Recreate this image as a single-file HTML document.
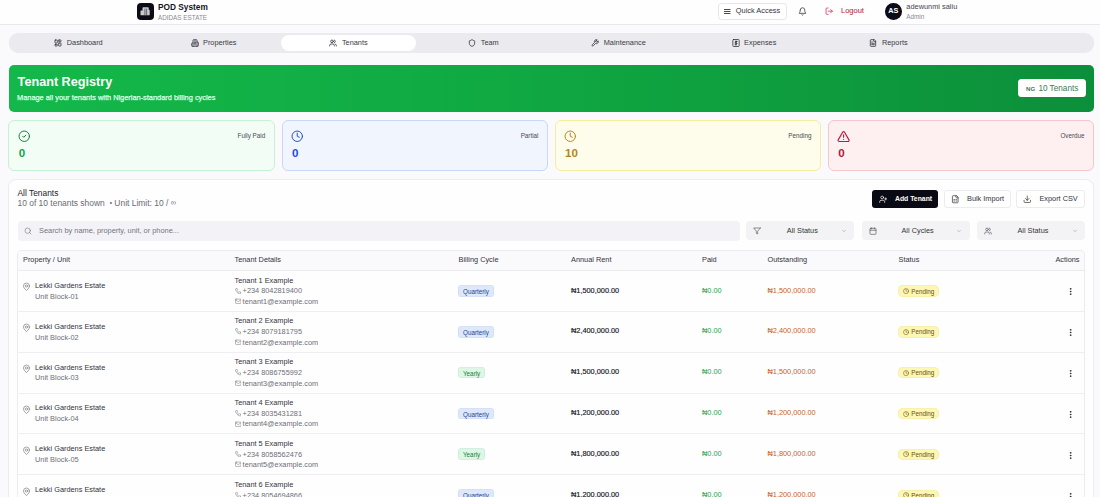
<!DOCTYPE html>
<html><head><meta charset="utf-8">
<style>
*{box-sizing:border-box;margin:0;padding:0}
html,body{width:1100px;height:497px;overflow:hidden}
body{font-family:"Liberation Sans",sans-serif;background:#fafafc;color:#252530;position:relative;font-size:7.35px}
.abs{position:absolute}
svg{display:block;fill:none;stroke:currentColor;stroke-width:2;stroke-linecap:round;stroke-linejoin:round}
.t{position:absolute;white-space:nowrap;line-height:1}
/* header */
#hdr{position:absolute;left:0;top:0;width:1100px;height:25px;background:#fefefe;border-bottom:1px solid #e8e8ee}
#logo{left:137px;top:3px;width:16.5px;height:16.5px;border-radius:4px;background:#0c0c16;color:#fff}
#nav{left:8.5px;top:33px;width:1085px;height:20px;border-radius:9px;background:#ebeaef}
.tab{position:absolute;top:2.3px;height:16px;padding-bottom:1.4px;width:135px;border-radius:8px;display:flex;align-items:center;justify-content:center;color:#3a3a44;font-size:7.35px}
.tab svg{width:8px;height:8px;margin-right:4.5px;stroke-width:2.3;color:#2e2e38}
.tab.on{background:#fff}
#banner{left:8.5px;top:65px;width:1085px;height:46.5px;border-radius:5px;background:linear-gradient(90deg,#14b84a 0%,#10a942 45%,#0c8f3a 100%)}
.stat{position:absolute;top:120.3px;width:266.2px;height:51px;border-radius:6px;border:1px solid}
.stat svg{position:absolute;left:8.9px;top:8.9px;width:12.5px;height:12.5px;stroke-width:1.9}
.stat .num{position:absolute;left:9.5px;top:26.6px;font-size:11.55px;font-weight:700;line-height:1}
.stat .lbl{position:absolute;right:8.3px;top:12px;font-size:6.3px;color:#4a4a55;line-height:1}
#card{left:8px;top:179px;width:1085.6px;height:340px;border-radius:8px;border:1px solid #ebebf0;background:#fefefe}
.btn{position:absolute;top:189.8px;height:18.6px;border-radius:3px;display:flex;align-items:center;font-size:7.35px}
.sel{position:absolute;top:221.4px;height:19px;width:108px;border-radius:4px;background:#f3f3f6;color:#333}
.sel svg{position:absolute;top:5.5px;width:8px;height:8px;color:#4a4a52;stroke-width:1.8}
.sel .tx{position:absolute;top:5.5px;left:2px;width:100%;text-align:center;line-height:1}
#table{left:17px;top:249.5px;width:1067.5px;height:300px;border:1px solid #ececf0;border-radius:4px;background:#fefefe;overflow:hidden}
.th{position:absolute;top:0;height:20.5px;width:100%;background:#fafafc;border-bottom:1px solid #ebebef}
.row{position:absolute;left:0;width:100%;height:40.85px;border-bottom:1px solid #efeff3}
.c{position:absolute;white-space:nowrap;line-height:1}
.badge{position:absolute;height:11.8px;border-radius:3.5px;font-size:6.3px;line-height:13px;padding:0 5px;box-shadow:inset 0 0 0 0.6px rgba(120,150,220,0.18)}
.pend{position:absolute;left:879.7px;top:14.3px;width:41.5px;height:11.5px;border-radius:5px;background:#fdf7b6;color:#6a4f0e;font-size:6.3px;box-shadow:inset 0 0 0 0.6px #f6eca0}
</style></head>
<body>
<div id="hdr"></div>
<div id="logo" class="abs">
 <svg viewBox="0 0 16.5 16.5" style="position:absolute;left:0;top:0;width:16.5px;height:16.5px;stroke:none"><path d="M6.2 4.2h4.9a0.6 0.6 0 0 1 0.6 0.6v2h0.4a0.6 0.6 0 0 1 0.6 0.6v4.3a0.5 0.5 0 0 1-0.5 0.5h-8.2a0.5 0.5 0 0 1-0.5-0.5v-3.7a0.6 0.6 0 0 1 0.6-0.6h1.4v-2.6a0.6 0.6 0 0 1 0.6-0.6z" fill="#c9c9ce"/><path d="M7.9 6v6.2M9.6 6v6.2" stroke="#3a3a44" stroke-width="0.7" fill="none"/></svg>
</div>
<div class="t" style="left:158px;top:2.6px;font-size:8.3px;font-weight:700;color:#15151e">POD System</div>
<div class="t" style="left:158px;top:15.1px;font-size:6.33px;color:#8a8a94">ADIDAS ESTATE</div>

<div class="abs" style="left:718px;top:3px;width:68.5px;height:16.5px;border:1px solid #e6e6ec;border-radius:3.5px;background:#fff"></div>
<svg class="abs" viewBox="0 0 8 8" style="left:723px;top:7px;width:8px;height:8px;color:#4a4a54;stroke-width:1;stroke-linecap:butt"><path d="M1 2.5h6.5M1 4.5h6.5M1 6.5h6.5"/></svg>
<div class="t" style="left:735.8px;top:7.4px;font-size:7.4px;color:#33333d">Quick Access</div>
<svg class="abs" viewBox="0 0 24 24" style="left:797.5px;top:7px;width:9px;height:9px;color:#333"><path d="M6 8a6 6 0 0 1 12 0c0 7 3 9 3 9H3s3-2 3-9"/><path d="M10.3 21a1.94 1.94 0 0 0 3.4 0"/></svg>
<svg class="abs" viewBox="0 0 24 24" style="left:824.6px;top:7.3px;width:8.4px;height:8.4px;color:#c81e45"><path d="M9 21H5a2 2 0 0 1-2-2V5a2 2 0 0 1 2-2h4"/><polyline points="16 17 21 12 16 7"/><line x1="21" x2="9" y1="12" y2="12"/></svg>
<div class="t" style="left:841px;top:7px;font-size:7.5px;color:#c2193f;-webkit-text-stroke:0.05px #c2193f">Logout</div>
<div class="abs" style="left:885px;top:3px;width:16.6px;height:16.6px;border-radius:50%;background:#0c0c18;color:#fff;font-weight:700;font-size:7.3px;line-height:16.6px;text-align:center">AS</div>
<div class="t" style="left:906.3px;top:3.2px;font-size:7.4px;color:#44444e">adewunmi saliu</div>
<div class="t" style="left:906.3px;top:13.8px;font-size:6.35px;color:#8a8a94">Admin</div>

<div id="nav" class="abs">
 <div class="tab" style="left:2.5px"><svg viewBox="0 0 24 24"><rect width="7" height="9" x="3" y="3" rx="1"/><rect width="7" height="5" x="14" y="3" rx="1"/><rect width="7" height="9" x="14" y="12" rx="1"/><rect width="7" height="5" x="3" y="16" rx="1"/></svg>Dashboard</div>
 <div class="tab" style="left:137.5px"><svg viewBox="0 0 24 24"><path d="M6 22V4a2 2 0 0 1 2-2h8a2 2 0 0 1 2 2v18Z"/><path d="M6 12H4a2 2 0 0 0-2 2v6a2 2 0 0 0 2 2h2"/><path d="M18 9h2a2 2 0 0 1 2 2v9a2 2 0 0 1-2 2h-2"/><path d="M10 6h4M10 10h4M10 14h4M10 18h4"/></svg>Properties</div>
 <div class="tab on" style="left:272.5px"><svg viewBox="0 0 24 24"><path d="M16 21v-2a4 4 0 0 0-4-4H6a4 4 0 0 0-4 4v2"/><circle cx="9" cy="7" r="4"/><path d="M22 21v-2a4 4 0 0 0-3-3.87"/><path d="M16 3.13a4 4 0 0 1 0 7.75"/></svg>Tenants</div>
 <div class="tab" style="left:407.5px"><svg viewBox="0 0 24 24"><path d="M20 13c0 5-3.5 7.5-7.66 8.95a1 1 0 0 1-.67-.01C7.5 20.5 4 18 4 13V6a1 1 0 0 1 1-1c2 0 4.5-1.2 6.24-2.72a1.17 1.17 0 0 1 1.52 0C14.51 3.810 17 5 19 5a1 1 0 0 1 1 1z"/></svg>Team</div>
 <div class="tab" style="left:542.5px"><svg viewBox="0 0 24 24"><path d="M14.7 6.3a1 1 0 0 0 0 1.4l1.6 1.6a1 1 0 0 0 1.4 0l3.77-3.77a6 6 0 0 1-7.94 7.94l-6.91 6.91a2.12 2.12 0 0 1-3-3l6.91-6.91a6 6 0 0 1 7.94-7.94l-3.760 3.76z"/></svg>Maintenance</div>
 <div class="tab" style="left:677.5px"><svg viewBox="0 0 24 24" style="margin-left:1px"><rect x="2.5" y="1.5" width="19" height="21" rx="2.5"/><path d="M15 7.5h-3.6a2 2 0 0 0 0 4h1.2a2 2 0 0 1 0 4H9M12 5.5v13" stroke-width="2.8"/></svg>Expenses</div>
 <div class="tab" style="left:812.5px"><svg viewBox="0 0 24 24"><path d="M15 2H6a2 2 0 0 0-2 2v16a2 2 0 0 0 2 2h12a2 2 0 0 0 2-2V7Z"/><path d="M14 2v4a2 2 0 0 0 2 2h4"/><path d="M10 9H8M16 13H8M16 17H8"/></svg>Reports</div>
</div>

<div id="banner" class="abs"></div>
<div class="t" style="left:17.6px;top:76px;font-size:12.65px;font-weight:700;color:#fff">Tenant Registry</div>
<div class="t" style="left:17px;top:93.5px;font-size:7.4px;color:#dcffe6;-webkit-text-stroke:0.25px #dcffe6">Manage all your tenants with Nigerian-standard billing cycles</div>
<div class="abs" style="left:1018px;top:78.7px;width:67.5px;height:18.7px;border-radius:3.5px;background:#fff"></div>
<div class="t" style="left:1026px;top:85.6px;font-size:6.1px;font-weight:700;color:#3f7a5a">NG</div>
<div class="t" style="left:1038.4px;top:84.6px;font-size:8.2px;color:#3f7a5a">10 Tenants</div>

<div class="stat" style="left:8.35px;background:#f2fdf5;border-color:#c6f2d4;color:#15803d">
 <svg viewBox="0 0 24 24"><circle cx="12" cy="12" r="10"/><path d="m9 12 2 2 4-4"/></svg>
 <div class="num" style="color:#16a34a">0</div><div class="lbl">Fully Paid</div></div>
<div class="stat" style="left:281.6px;background:#f0f5fe;border-color:#c6d9f7;color:#1d4ed8">
 <svg viewBox="0 0 24 24"><circle cx="12" cy="12" r="10"/><polyline points="12 6 12 12 16 14"/></svg>
 <div class="num" style="color:#1d4ed8">0</div><div class="lbl">Partial</div></div>
<div class="stat" style="left:554.5px;background:#fefcea;border-color:#f7eda0;color:#b7851c">
 <svg viewBox="0 0 24 24"><circle cx="12" cy="12" r="10"/><polyline points="12 6 12 12 16 14"/></svg>
 <div class="num" style="color:#b7841a">10</div><div class="lbl">Pending</div></div>
<div class="stat" style="left:827.7px;background:#fef0f1;border-color:#f7c6cc;color:#b91c3c">
 <svg viewBox="0 0 24 24" style="width:13.2px;height:13.2px;left:8.6px;top:8.3px;stroke-width:2.1"><path d="m21.73 18-8-14a2 2 0 0 0-3.48 0l-8 14A2 2 0 0 0 4 21h16a2 2 0 0 0 1.730-3"/><path d="M12 9v4"/><path d="M12 17h.01"/></svg>
 <div class="num" style="color:#b3183a">0</div><div class="lbl">Overdue</div></div>

<div id="card" class="abs"></div>
<div class="t" style="left:17.5px;top:188.5px;font-size:8.4px;color:#22222c">All Tenants</div>
<div class="t" style="left:17.5px;top:199px;font-size:8.45px;color:#6b6b76">10 of 10 tenants shown<span style="margin-left:5px;font-size:6.5px;position:relative;top:-0.6px">•</span><span style="margin-left:2.3px">Unit Limit: 10 / </span><span style="font-size:7.6px;position:relative;top:-0.9px">∞</span></div>

<div class="btn" style="left:872px;width:66px;background:#0a0a14;color:#fff"></div>
<svg class="abs" viewBox="0 0 24 24" style="left:878.5px;top:195px;width:8.5px;height:8.5px;color:#fff"><path d="M16 21v-2a4 4 0 0 0-4-4H6a4 4 0 0 0-4 4v2"/><circle cx="9" cy="7" r="4"/><line x1="19" x2="19" y1="8" y2="14"/><line x1="22" x2="16" y1="11" y2="11"/></svg>
<div class="t" style="left:895.3px;top:195px;font-size:7.7px;font-weight:700;transform:scaleX(0.89);transform-origin:0 0;color:#fff">Add Tenant</div>
<div class="btn" style="left:943.5px;width:67px;background:#fff;border:1px solid #ebebf0"></div>
<svg class="abs" viewBox="0 0 24 24" style="left:950.5px;top:195px;width:8.5px;height:8.5px;color:#333"><path d="M15 2H6a2 2 0 0 0-2 2v16a2 2 0 0 0 2 2h12a2 2 0 0 0 2-2V7Z"/><path d="M14 2v4a2 2 0 0 0 2 2h4"/><path d="M8 13h2M14 13h2M8 17h2M14 17h2"/></svg>
<div class="t" style="left:967px;top:195px;font-size:7.35px;color:#33333d">Bulk Import</div>
<div class="btn" style="left:1015.5px;width:69px;background:#fff;border:1px solid #ebebf0"></div>
<svg class="abs" viewBox="0 0 24 24" style="left:1022.5px;top:195px;width:8.5px;height:8.5px;color:#333"><path d="M21 15v4a2 2 0 0 1-2 2H5a2 2 0 0 1-2-2v-4"/><polyline points="7 10 12 15 17 10"/><line x1="12" x2="12" y1="15" y2="3"/></svg>
<div class="t" style="left:1039.4px;top:195px;font-size:7.35px;color:#33333d">Export CSV</div>

<div class="abs" style="left:17.5px;top:221.4px;width:722.5px;height:19.2px;border-radius:4px;background:#f3f3f7"></div>
<svg class="abs" viewBox="0 0 24 24" style="left:24.3px;top:227px;width:8px;height:8px;color:#777;stroke-width:1.8"><circle cx="11" cy="11" r="8"/><path d="m21 21-4.3-4.3"/></svg>
<div class="t" style="left:39px;top:227.2px;font-size:7.4px;color:#74747e">Search by name, property, unit, or phone...</div>

<div class="sel" style="left:746.3px"><svg viewBox="0 0 24 24" style="left:7px"><polygon points="22 3 2 3 10 12.46 10 19 14 21 14 12.46 22 3"/></svg><div class="tx">All Status</div><svg viewBox="0 0 24 24" style="left:94.8px;width:6px;height:6px;top:6.5px;color:#888"><path d="m6 9 6 6 6-6"/></svg></div>
<div class="sel" style="left:861.6px"><svg viewBox="0 0 24 24" style="left:7px"><rect width="18" height="18" x="3" y="4" rx="2"/><path d="M16 2v4M8 2v4M3 10h18"/></svg><div class="tx">All Cycles</div><svg viewBox="0 0 24 24" style="left:94.8px;width:6px;height:6px;top:6.5px;color:#888"><path d="m6 9 6 6 6-6"/></svg></div>
<div class="sel" style="left:976.9px"><svg viewBox="0 0 24 24" style="left:7px"><path d="M16 21v-2a4 4 0 0 0-4-4H6a4 4 0 0 0-4 4v2"/><circle cx="9" cy="7" r="4"/><path d="M22 21v-2a4 4 0 0 0-3-3.87"/><path d="M16 3.13a4 4 0 0 1 0 7.75"/></svg><div class="tx">All Status</div><svg viewBox="0 0 24 24" style="left:94.8px;width:6px;height:6px;top:6.5px;color:#888"><path d="m6 9 6 6 6-6"/></svg></div>

<div id="table" class="abs">
 <div class="th">
  <div class="c" style="left:5px;top:5.3px;color:#33333d">Property / Unit</div>
  <div class="c" style="left:216.5px;top:5.3px;color:#33333d">Tenant Details</div>
  <div class="c" style="left:440.5px;top:5.3px;color:#33333d">Billing Cycle</div>
  <div class="c" style="left:553px;top:5.3px;color:#33333d">Annual Rent</div>
  <div class="c" style="left:684px;top:5.3px;color:#33333d">Paid</div>
  <div class="c" style="left:749.5px;top:5.3px;color:#33333d">Outstanding</div>
  <div class="c" style="left:880.5px;top:5.3px;color:#33333d">Status</div>
  <div class="c" style="right:4px;top:5.3px;color:#33333d">Actions</div>
 </div>
 <div id="rows"><div class="row" style="top:20.5px">
 <svg class="abs" viewBox="0 0 24 24" style="left:4.2px;top:11.3px;width:9px;height:9.5px;color:#85858f;stroke-width:2"><path d="M20 10c0 6-8 12-8 12s-8-6-8-12a8 8 0 0 1 16 0Z"/><circle cx="12" cy="10" r="3"/></svg>
 <div class="c" style="left:17px;top:10.9px;color:#33333d">Lekki Gardens Estate</div>
 <div class="c" style="left:17px;top:21.8px;color:#6e6e78">Unit Block-01</div>
 <div class="c" style="left:216.5px;top:5.6px;color:#33333d">Tenant 1 Example</div>
 <svg class="abs" viewBox="0 0 24 24" style="left:216.5px;top:16.6px;width:6.5px;height:6.5px;color:#7a7a84"><path d="M22 16.92v3a2 2 0 0 1-2.18 2 19.79 19.79 0 0 1-8.63-3.07 19.5 19.5 0 0 1-6-6 19.79 19.79 0 0 1-3.07-8.67A2 2 0 0 1 4.11 2h3a2 2 0 0 1 2 1.72 12.84 12.84 0 0 0 .7 2.81 2 2 0 0 1-.45 2.11L8.09 9.91a16 16 0 0 0 6 6l1.27-1.27a2 2 0 0 1 2.11-.45 12.84 12.84 0 0 0 2.81.7A2 2 0 0 1 22 16.92z"/></svg>
 <div class="c" style="left:224.6px;top:16.3px;color:#6e6e78">+234 8042819400</div>
 <svg class="abs" viewBox="0 0 24 24" style="left:216.5px;top:27px;width:6.5px;height:6.5px;color:#7a7a84"><rect width="20" height="16" x="2" y="4" rx="2"/><path d="m22 7-8.97 5.7a1.94 1.94 0 0 1-2.06 0L2 7"/></svg>
 <div class="c" style="left:224.6px;top:26.9px;color:#6e6e78">tenant1@example.com</div>
 <div class="badge" style="left:440px;top:14px;background:#dde9fb;color:#2a3f8f">Quarterly</div>
 <div class="c" style="left:553px;top:15.5px;color:#15151e;-webkit-text-stroke:0.15px #15151e">₦1,500,000.00</div>
 <div class="c" style="left:684px;top:15.5px;color:#1ea34f">₦0.00</div>
 <div class="c" style="left:749.5px;top:15.5px;color:#c8602a">₦1,500,000.00</div>
 <div class="pend"><svg viewBox="0 0 24 24" style="position:absolute;left:5.2px;top:2.7px;width:6.2px;height:6.2px;color:#6a4f0e"><circle cx="12" cy="12" r="10"/><polyline points="12 6 12 12 16 14"/></svg><div class="c" style="left:13.5px;top:3.3px">Pending</div></div>
 <svg class="abs" viewBox="0 0 24 24" style="left:1047.9px;top:16.3px;width:9px;height:9px;color:#222;stroke-width:2.3"><circle cx="12" cy="12" r="1"/><circle cx="12" cy="5" r="1"/><circle cx="12" cy="19" r="1"/></svg>
</div>
<div class="row" style="top:61.35px">
 <svg class="abs" viewBox="0 0 24 24" style="left:4.2px;top:11.3px;width:9px;height:9.5px;color:#85858f;stroke-width:2"><path d="M20 10c0 6-8 12-8 12s-8-6-8-12a8 8 0 0 1 16 0Z"/><circle cx="12" cy="10" r="3"/></svg>
 <div class="c" style="left:17px;top:10.9px;color:#33333d">Lekki Gardens Estate</div>
 <div class="c" style="left:17px;top:21.8px;color:#6e6e78">Unit Block-02</div>
 <div class="c" style="left:216.5px;top:5.6px;color:#33333d">Tenant 2 Example</div>
 <svg class="abs" viewBox="0 0 24 24" style="left:216.5px;top:16.6px;width:6.5px;height:6.5px;color:#7a7a84"><path d="M22 16.92v3a2 2 0 0 1-2.18 2 19.79 19.79 0 0 1-8.63-3.07 19.5 19.5 0 0 1-6-6 19.79 19.79 0 0 1-3.07-8.67A2 2 0 0 1 4.11 2h3a2 2 0 0 1 2 1.72 12.84 12.84 0 0 0 .7 2.81 2 2 0 0 1-.45 2.11L8.09 9.91a16 16 0 0 0 6 6l1.27-1.27a2 2 0 0 1 2.11-.45 12.84 12.84 0 0 0 2.81.7A2 2 0 0 1 22 16.92z"/></svg>
 <div class="c" style="left:224.6px;top:16.3px;color:#6e6e78">+234 8079181795</div>
 <svg class="abs" viewBox="0 0 24 24" style="left:216.5px;top:27px;width:6.5px;height:6.5px;color:#7a7a84"><rect width="20" height="16" x="2" y="4" rx="2"/><path d="m22 7-8.97 5.7a1.94 1.94 0 0 1-2.06 0L2 7"/></svg>
 <div class="c" style="left:224.6px;top:26.9px;color:#6e6e78">tenant2@example.com</div>
 <div class="badge" style="left:440px;top:14px;background:#dde9fb;color:#2a3f8f">Quarterly</div>
 <div class="c" style="left:553px;top:15.5px;color:#15151e;-webkit-text-stroke:0.15px #15151e">₦2,400,000.00</div>
 <div class="c" style="left:684px;top:15.5px;color:#1ea34f">₦0.00</div>
 <div class="c" style="left:749.5px;top:15.5px;color:#c8602a">₦2,400,000.00</div>
 <div class="pend"><svg viewBox="0 0 24 24" style="position:absolute;left:5.2px;top:2.7px;width:6.2px;height:6.2px;color:#6a4f0e"><circle cx="12" cy="12" r="10"/><polyline points="12 6 12 12 16 14"/></svg><div class="c" style="left:13.5px;top:3.3px">Pending</div></div>
 <svg class="abs" viewBox="0 0 24 24" style="left:1047.9px;top:16.3px;width:9px;height:9px;color:#222;stroke-width:2.3"><circle cx="12" cy="12" r="1"/><circle cx="12" cy="5" r="1"/><circle cx="12" cy="19" r="1"/></svg>
</div>
<div class="row" style="top:102.2px">
 <svg class="abs" viewBox="0 0 24 24" style="left:4.2px;top:11.3px;width:9px;height:9.5px;color:#85858f;stroke-width:2"><path d="M20 10c0 6-8 12-8 12s-8-6-8-12a8 8 0 0 1 16 0Z"/><circle cx="12" cy="10" r="3"/></svg>
 <div class="c" style="left:17px;top:10.9px;color:#33333d">Lekki Gardens Estate</div>
 <div class="c" style="left:17px;top:21.8px;color:#6e6e78">Unit Block-03</div>
 <div class="c" style="left:216.5px;top:5.6px;color:#33333d">Tenant 3 Example</div>
 <svg class="abs" viewBox="0 0 24 24" style="left:216.5px;top:16.6px;width:6.5px;height:6.5px;color:#7a7a84"><path d="M22 16.92v3a2 2 0 0 1-2.18 2 19.79 19.79 0 0 1-8.63-3.07 19.5 19.5 0 0 1-6-6 19.79 19.79 0 0 1-3.07-8.67A2 2 0 0 1 4.11 2h3a2 2 0 0 1 2 1.72 12.84 12.84 0 0 0 .7 2.81 2 2 0 0 1-.45 2.11L8.09 9.91a16 16 0 0 0 6 6l1.27-1.27a2 2 0 0 1 2.11-.45 12.84 12.84 0 0 0 2.81.7A2 2 0 0 1 22 16.92z"/></svg>
 <div class="c" style="left:224.6px;top:16.3px;color:#6e6e78">+234 8086755992</div>
 <svg class="abs" viewBox="0 0 24 24" style="left:216.5px;top:27px;width:6.5px;height:6.5px;color:#7a7a84"><rect width="20" height="16" x="2" y="4" rx="2"/><path d="m22 7-8.97 5.7a1.94 1.94 0 0 1-2.06 0L2 7"/></svg>
 <div class="c" style="left:224.6px;top:26.9px;color:#6e6e78">tenant3@example.com</div>
 <div class="badge" style="left:440px;top:14px;background:#dcf8e4;color:#1f7a3e">Yearly</div>
 <div class="c" style="left:553px;top:15.5px;color:#15151e;-webkit-text-stroke:0.15px #15151e">₦1,500,000.00</div>
 <div class="c" style="left:684px;top:15.5px;color:#1ea34f">₦0.00</div>
 <div class="c" style="left:749.5px;top:15.5px;color:#c8602a">₦1,500,000.00</div>
 <div class="pend"><svg viewBox="0 0 24 24" style="position:absolute;left:5.2px;top:2.7px;width:6.2px;height:6.2px;color:#6a4f0e"><circle cx="12" cy="12" r="10"/><polyline points="12 6 12 12 16 14"/></svg><div class="c" style="left:13.5px;top:3.3px">Pending</div></div>
 <svg class="abs" viewBox="0 0 24 24" style="left:1047.9px;top:16.3px;width:9px;height:9px;color:#222;stroke-width:2.3"><circle cx="12" cy="12" r="1"/><circle cx="12" cy="5" r="1"/><circle cx="12" cy="19" r="1"/></svg>
</div>
<div class="row" style="top:143.05px">
 <svg class="abs" viewBox="0 0 24 24" style="left:4.2px;top:11.3px;width:9px;height:9.5px;color:#85858f;stroke-width:2"><path d="M20 10c0 6-8 12-8 12s-8-6-8-12a8 8 0 0 1 16 0Z"/><circle cx="12" cy="10" r="3"/></svg>
 <div class="c" style="left:17px;top:10.9px;color:#33333d">Lekki Gardens Estate</div>
 <div class="c" style="left:17px;top:21.8px;color:#6e6e78">Unit Block-04</div>
 <div class="c" style="left:216.5px;top:5.6px;color:#33333d">Tenant 4 Example</div>
 <svg class="abs" viewBox="0 0 24 24" style="left:216.5px;top:16.6px;width:6.5px;height:6.5px;color:#7a7a84"><path d="M22 16.92v3a2 2 0 0 1-2.18 2 19.79 19.79 0 0 1-8.63-3.07 19.5 19.5 0 0 1-6-6 19.79 19.79 0 0 1-3.07-8.67A2 2 0 0 1 4.11 2h3a2 2 0 0 1 2 1.72 12.84 12.84 0 0 0 .7 2.81 2 2 0 0 1-.45 2.11L8.09 9.91a16 16 0 0 0 6 6l1.27-1.27a2 2 0 0 1 2.11-.45 12.84 12.84 0 0 0 2.81.7A2 2 0 0 1 22 16.92z"/></svg>
 <div class="c" style="left:224.6px;top:16.3px;color:#6e6e78">+234 8035431281</div>
 <svg class="abs" viewBox="0 0 24 24" style="left:216.5px;top:27px;width:6.5px;height:6.5px;color:#7a7a84"><rect width="20" height="16" x="2" y="4" rx="2"/><path d="m22 7-8.97 5.7a1.94 1.94 0 0 1-2.06 0L2 7"/></svg>
 <div class="c" style="left:224.6px;top:26.9px;color:#6e6e78">tenant4@example.com</div>
 <div class="badge" style="left:440px;top:14px;background:#dde9fb;color:#2a3f8f">Quarterly</div>
 <div class="c" style="left:553px;top:15.5px;color:#15151e;-webkit-text-stroke:0.15px #15151e">₦1,200,000.00</div>
 <div class="c" style="left:684px;top:15.5px;color:#1ea34f">₦0.00</div>
 <div class="c" style="left:749.5px;top:15.5px;color:#c8602a">₦1,200,000.00</div>
 <div class="pend"><svg viewBox="0 0 24 24" style="position:absolute;left:5.2px;top:2.7px;width:6.2px;height:6.2px;color:#6a4f0e"><circle cx="12" cy="12" r="10"/><polyline points="12 6 12 12 16 14"/></svg><div class="c" style="left:13.5px;top:3.3px">Pending</div></div>
 <svg class="abs" viewBox="0 0 24 24" style="left:1047.9px;top:16.3px;width:9px;height:9px;color:#222;stroke-width:2.3"><circle cx="12" cy="12" r="1"/><circle cx="12" cy="5" r="1"/><circle cx="12" cy="19" r="1"/></svg>
</div>
<div class="row" style="top:183.9px">
 <svg class="abs" viewBox="0 0 24 24" style="left:4.2px;top:11.3px;width:9px;height:9.5px;color:#85858f;stroke-width:2"><path d="M20 10c0 6-8 12-8 12s-8-6-8-12a8 8 0 0 1 16 0Z"/><circle cx="12" cy="10" r="3"/></svg>
 <div class="c" style="left:17px;top:10.9px;color:#33333d">Lekki Gardens Estate</div>
 <div class="c" style="left:17px;top:21.8px;color:#6e6e78">Unit Block-05</div>
 <div class="c" style="left:216.5px;top:5.6px;color:#33333d">Tenant 5 Example</div>
 <svg class="abs" viewBox="0 0 24 24" style="left:216.5px;top:16.6px;width:6.5px;height:6.5px;color:#7a7a84"><path d="M22 16.92v3a2 2 0 0 1-2.18 2 19.79 19.79 0 0 1-8.63-3.07 19.5 19.5 0 0 1-6-6 19.79 19.79 0 0 1-3.07-8.67A2 2 0 0 1 4.11 2h3a2 2 0 0 1 2 1.72 12.84 12.84 0 0 0 .7 2.81 2 2 0 0 1-.45 2.11L8.09 9.91a16 16 0 0 0 6 6l1.27-1.27a2 2 0 0 1 2.11-.45 12.84 12.84 0 0 0 2.81.7A2 2 0 0 1 22 16.92z"/></svg>
 <div class="c" style="left:224.6px;top:16.3px;color:#6e6e78">+234 8058562476</div>
 <svg class="abs" viewBox="0 0 24 24" style="left:216.5px;top:27px;width:6.5px;height:6.5px;color:#7a7a84"><rect width="20" height="16" x="2" y="4" rx="2"/><path d="m22 7-8.97 5.7a1.94 1.94 0 0 1-2.06 0L2 7"/></svg>
 <div class="c" style="left:224.6px;top:26.9px;color:#6e6e78">tenant5@example.com</div>
 <div class="badge" style="left:440px;top:14px;background:#dcf8e4;color:#1f7a3e">Yearly</div>
 <div class="c" style="left:553px;top:15.5px;color:#15151e;-webkit-text-stroke:0.15px #15151e">₦1,800,000.00</div>
 <div class="c" style="left:684px;top:15.5px;color:#1ea34f">₦0.00</div>
 <div class="c" style="left:749.5px;top:15.5px;color:#c8602a">₦1,800,000.00</div>
 <div class="pend"><svg viewBox="0 0 24 24" style="position:absolute;left:5.2px;top:2.7px;width:6.2px;height:6.2px;color:#6a4f0e"><circle cx="12" cy="12" r="10"/><polyline points="12 6 12 12 16 14"/></svg><div class="c" style="left:13.5px;top:3.3px">Pending</div></div>
 <svg class="abs" viewBox="0 0 24 24" style="left:1047.9px;top:16.3px;width:9px;height:9px;color:#222;stroke-width:2.3"><circle cx="12" cy="12" r="1"/><circle cx="12" cy="5" r="1"/><circle cx="12" cy="19" r="1"/></svg>
</div>
<div class="row" style="top:224.75px">
 <svg class="abs" viewBox="0 0 24 24" style="left:4.2px;top:11.3px;width:9px;height:9.5px;color:#85858f;stroke-width:2"><path d="M20 10c0 6-8 12-8 12s-8-6-8-12a8 8 0 0 1 16 0Z"/><circle cx="12" cy="10" r="3"/></svg>
 <div class="c" style="left:17px;top:10.9px;color:#33333d">Lekki Gardens Estate</div>
 <div class="c" style="left:17px;top:21.8px;color:#6e6e78">Unit Block-06</div>
 <div class="c" style="left:216.5px;top:5.6px;color:#33333d">Tenant 6 Example</div>
 <svg class="abs" viewBox="0 0 24 24" style="left:216.5px;top:16.6px;width:6.5px;height:6.5px;color:#7a7a84"><path d="M22 16.92v3a2 2 0 0 1-2.18 2 19.79 19.79 0 0 1-8.63-3.07 19.5 19.5 0 0 1-6-6 19.79 19.79 0 0 1-3.07-8.67A2 2 0 0 1 4.11 2h3a2 2 0 0 1 2 1.72 12.84 12.84 0 0 0 .7 2.81 2 2 0 0 1-.45 2.11L8.09 9.91a16 16 0 0 0 6 6l1.27-1.27a2 2 0 0 1 2.11-.45 12.84 12.84 0 0 0 2.81.7A2 2 0 0 1 22 16.92z"/></svg>
 <div class="c" style="left:224.6px;top:16.3px;color:#6e6e78">+234 8054694866</div>
 <svg class="abs" viewBox="0 0 24 24" style="left:216.5px;top:27px;width:6.5px;height:6.5px;color:#7a7a84"><rect width="20" height="16" x="2" y="4" rx="2"/><path d="m22 7-8.97 5.7a1.94 1.94 0 0 1-2.06 0L2 7"/></svg>
 <div class="c" style="left:224.6px;top:26.9px;color:#6e6e78">tenant6@example.com</div>
 <div class="badge" style="left:440px;top:14px;background:#dde9fb;color:#2a3f8f">Quarterly</div>
 <div class="c" style="left:553px;top:15.5px;color:#15151e;-webkit-text-stroke:0.15px #15151e">₦1,200,000.00</div>
 <div class="c" style="left:684px;top:15.5px;color:#1ea34f">₦0.00</div>
 <div class="c" style="left:749.5px;top:15.5px;color:#c8602a">₦1,200,000.00</div>
 <div class="pend"><svg viewBox="0 0 24 24" style="position:absolute;left:5.2px;top:2.7px;width:6.2px;height:6.2px;color:#6a4f0e"><circle cx="12" cy="12" r="10"/><polyline points="12 6 12 12 16 14"/></svg><div class="c" style="left:13.5px;top:3.3px">Pending</div></div>
 <svg class="abs" viewBox="0 0 24 24" style="left:1047.9px;top:16.3px;width:9px;height:9px;color:#222;stroke-width:2.3"><circle cx="12" cy="12" r="1"/><circle cx="12" cy="5" r="1"/><circle cx="12" cy="19" r="1"/></svg>
</div></div>
</div>
</body></html>
